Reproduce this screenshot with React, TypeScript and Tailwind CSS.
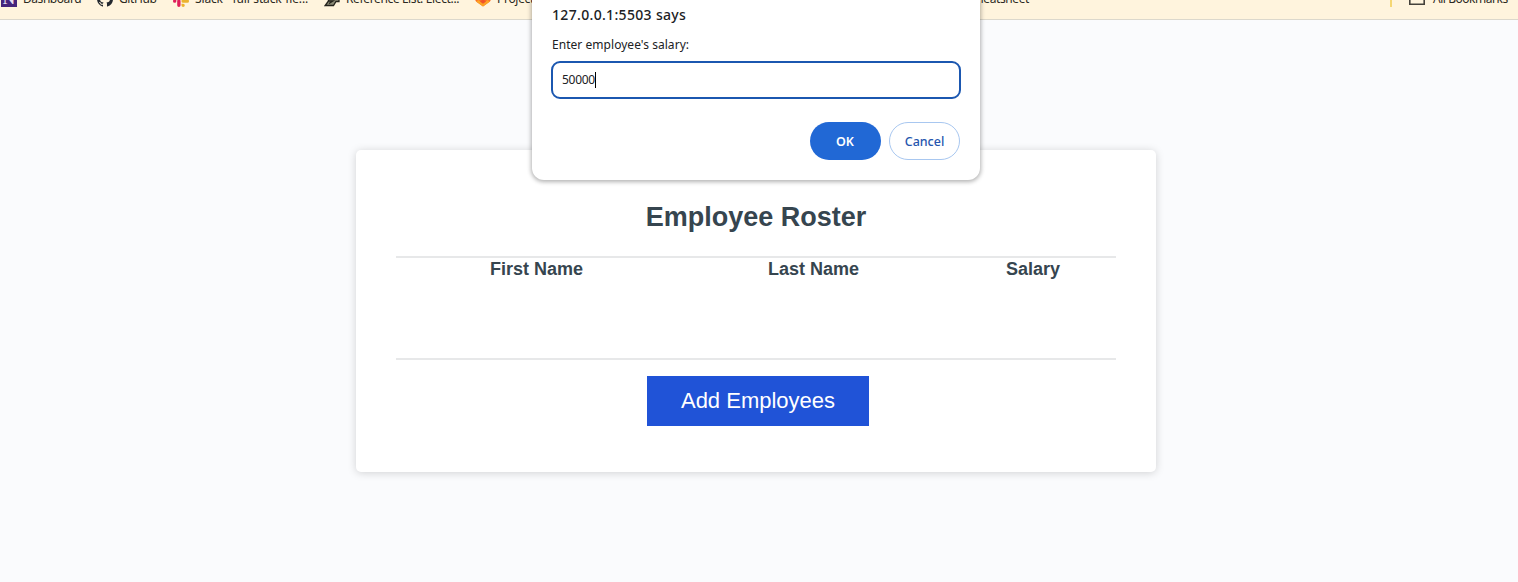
import { ReactNode } from "react";

function Bookmark({ icon, children, className }: { icon: ReactNode; children: ReactNode; className: string }) {
  return (
    <div className="flex h-5 shrink-0 items-center gap-1.5">
      <span className="flex size-4 shrink-0 items-center justify-center">{icon}</span>
      <span className={`whitespace-nowrap ${className}`}>{children}</span>
    </div>
  );
}

function NIcon() {
  return (
    <span className="flex size-4 items-center justify-center bg-[#46257c] font-['Liberation_Serif',serif] text-[17px] leading-4 font-bold text-[#e6dff2]">
      N
    </span>
  );
}

function GitHubIcon() {
  return (
    <svg viewBox="0 0 16 16" className="size-4" fill="#24292f">
      <path d="M8 0C3.58 0 0 3.58 0 8c0 3.54 2.29 6.53 5.47 7.59.4.07.55-.17.55-.38 0-.19-.01-.82-.01-1.49-2.01.37-2.53-.49-2.69-.94-.09-.23-.48-.94-.82-1.13-.28-.15-.68-.52-.01-.53.63-.01 1.08.58 1.23.82.72 1.21 1.87.87 2.33.66.07-.52.28-.87.51-1.07-1.78-.2-3.64-.89-3.64-3.95 0-.87.31-1.59.82-2.15-.08-.2-.36-1.02.08-2.12 0 0 .67-.21 2.2.82A7.6 7.6 0 0 1 8 3.86c.68 0 1.36.09 2 .27 1.53-1.04 2.2-.82 2.2-.82.44 1.1.16 1.92.08 2.12.51.56.82 1.27.82 2.15 0 3.07-1.87 3.75-3.65 3.95.29.25.54.73.54 1.48 0 1.07-.01 1.93-.01 2.2 0 .21.15.46.55.38A8.01 8.01 0 0 0 16 8c0-4.42-3.58-8-8-8Z" />
    </svg>
  );
}

function SlackIcon() {
  return (
    <svg viewBox="0 0 24 24" className="size-4">
      <path fill="#36c5f0" d="M8.8 0a2.5 2.5 0 0 0 0 5h2.5V2.500A2.500 2.500 0 0 0 8.800 0ZM8.800 6.300H2.500a2.500 2.500 0 0 0 0 5h6.300a2.500 2.500 0 0 0 0-5Z" />
      <path fill="#2eb67d" d="M24 8.800a2.500 2.500 0 0 0-5 0v2.500h2.500A2.500 2.500 0 0 0 24 8.800Zm-6.300 0V2.500a2.500 2.500 0 0 0-5 0v6.300a2.500 2.500 0 0 0 5 0Z" />
      <path fill="#ecb22e" d="M15.200 24a2.500 2.500 0 0 0 0-5h-2.500v2.500a2.500 2.500 0 0 0 2.500 2.500Zm0-6.300h6.300a2.500 2.500 0 0 0 0-5h-6.300a2.500 2.500 0 0 0 0 5Z" />
      <path fill="#e01e5a" d="M0 15.200a2.500 2.500 0 0 0 5 0v-2.500H2.500A2.500 2.500 0 0 0 0 15.200Zm6.300 0v6.300a2.500 2.500 0 0 0 5 0v-6.300a2.500 2.500 0 0 0-5 0Z" />
    </svg>
  );
}

function ReferenceIcon() {
  return (
    <svg viewBox="0 0 16 16" className="size-4" fill="#8b8b77" stroke="#24231c" strokeWidth="1.300">
      <path d="M4 2h11v8.500h-3l-2.500 4H1.200L4.500 10Z" />
      <path d="M4.500 10H9l-4 2.500" fill="none" />
    </svg>
  );
}

function GitLabIcon() {
  return (
    <svg viewBox="0 0 16 16" className="size-4">
      <path fill="#fc6d26" d="M3 1 0 8.500l1 2L8 15.500l7-5 1-2L13 1l-2 5H5Z" />
      <path fill="#fca326" d="M1 10.500 3.500 9 8 12.300 12.500 9l2.500 1.500-7 5Z" />
      <path fill="#f0532b" d="m8 8.500 3 2-3 2.300-3-2.300Z" />
    </svg>
  );
}

function FolderIcon() {
  return (
    <svg viewBox="0 0 16 16" className="size-4" fill="none" stroke="#45423b" strokeWidth="1.600">
      <path d="M.8 2.500h5.500l1.800 2h7.100v8.700H.8Z" />
    </svg>
  );
}

function BookmarksBar() {
  return (
    <header className="h-5 overflow-hidden border-b border-[#dcd8cc] bg-[#fff4dd] font-['Noto_Sans','Open_Sans',sans-serif] text-[12px] leading-5 text-[#2b2922]">
      <div className="-mt-[11px] flex h-5 items-center pl-px">
        <div className="flex flex-1 items-center gap-4">
          <Bookmark icon={<NIcon />} className="w-[58px] tracking-[-0.45px]">Dashboard</Bookmark>
          <Bookmark icon={<GitHubIcon />} className="w-[38px] tracking-[-0.4px]">GitHub</Bookmark>
          <Bookmark icon={<SlackIcon />} className="w-[113px] tracking-[-0.15px]">Slack - full-stack-fle...</Bookmark>
          <Bookmark icon={<ReferenceIcon />} className="w-[113px] tracking-[-0.36px]">Reference List: Elect...</Bookmark>
          <Bookmark icon={<GitLabIcon />} className="w-[448px] tracking-[-0.3px]">Projects</Bookmark>
          <span className="-ml-4 w-[84px] text-right tracking-[-0.4px]">cheatsheet</span>
        </div>
        <div className="flex items-center pr-[9px]">
          <span className="mr-[17px] h-4 w-0.5 bg-[#f5d774]" />
          <FolderIcon />
          <span className="ml-2 w-[76px] whitespace-nowrap tracking-[-0.46px]">All Bookmarks</span>
        </div>
      </div>
    </header>
  );
}

function PromptDialog() {
  return (
    <div
      role="dialog"
      className="absolute top-0 left-[532px] h-[180px] w-[448px] rounded-b-xl bg-white px-5 font-['Noto_Sans','Open_Sans',sans-serif] text-[#202124] shadow-[0_1px_4px_1px_rgba(0,0,0,0.3)]"
    >
      <h2 className="pt-[5px] text-[14px] leading-5 font-medium tracking-[0.33px]">127.0.0.1:5503 says</h2>
      <p className="mt-[11px] text-[12px] leading-[18px] tracking-[0.04px]">Enter employee's salary:</p>
      <div className="-mx-px mt-[7px] flex h-[38px] items-center rounded-[9px] border-2 border-[#1b57b0] pl-[9px] text-[12px] tracking-[-0.3px]">
        50000
        <span className="h-4 w-px bg-black" />
      </div>
      <div className="mt-[23px] flex justify-end gap-2 text-[12.5px] font-medium">
        <button className="h-[38px] w-[71px] rounded-full bg-[#2168d5] pt-0.5 pr-px font-semibold text-white">OK</button>
        <button className="h-[38px] w-[71px] rounded-full border border-[#a8c7f0] pt-0.5 text-[#2556ae]">Cancel</button>
      </div>
    </div>
  );
}

export default function App() {
  return (
    <div className="relative h-[582px] w-[1518px] overflow-hidden bg-[#fafbfd]">
      <BookmarksBar />
      <main className="mt-[130px] ml-[356px] h-[322px] w-[800px] rounded-[5px] bg-white px-10 pt-[47px] font-['Liberation_Sans',sans-serif] text-[#36454f] shadow-[0_1px_8px_rgba(0,0,0,0.17)]">
        <h1 className="text-center text-[27px] leading-10 font-bold">Employee Roster</h1>
        <div className="mt-[19px] h-[104px] border-y-2 border-[#e7e8e9]">
          <div className="grid grid-cols-[281px_273px_166px] text-center text-[18px] leading-[22px] font-bold">
            <span>First Name</span>
            <span>Last Name</span>
            <span>Salary</span>
          </div>
        </div>
        <button className="mt-4 ml-[251px] h-[50px] w-[222px] bg-[#2053d7] pb-0.5 text-[22px] text-white">Add Employees</button>
      </main>
      <PromptDialog />
    </div>
  );
}
